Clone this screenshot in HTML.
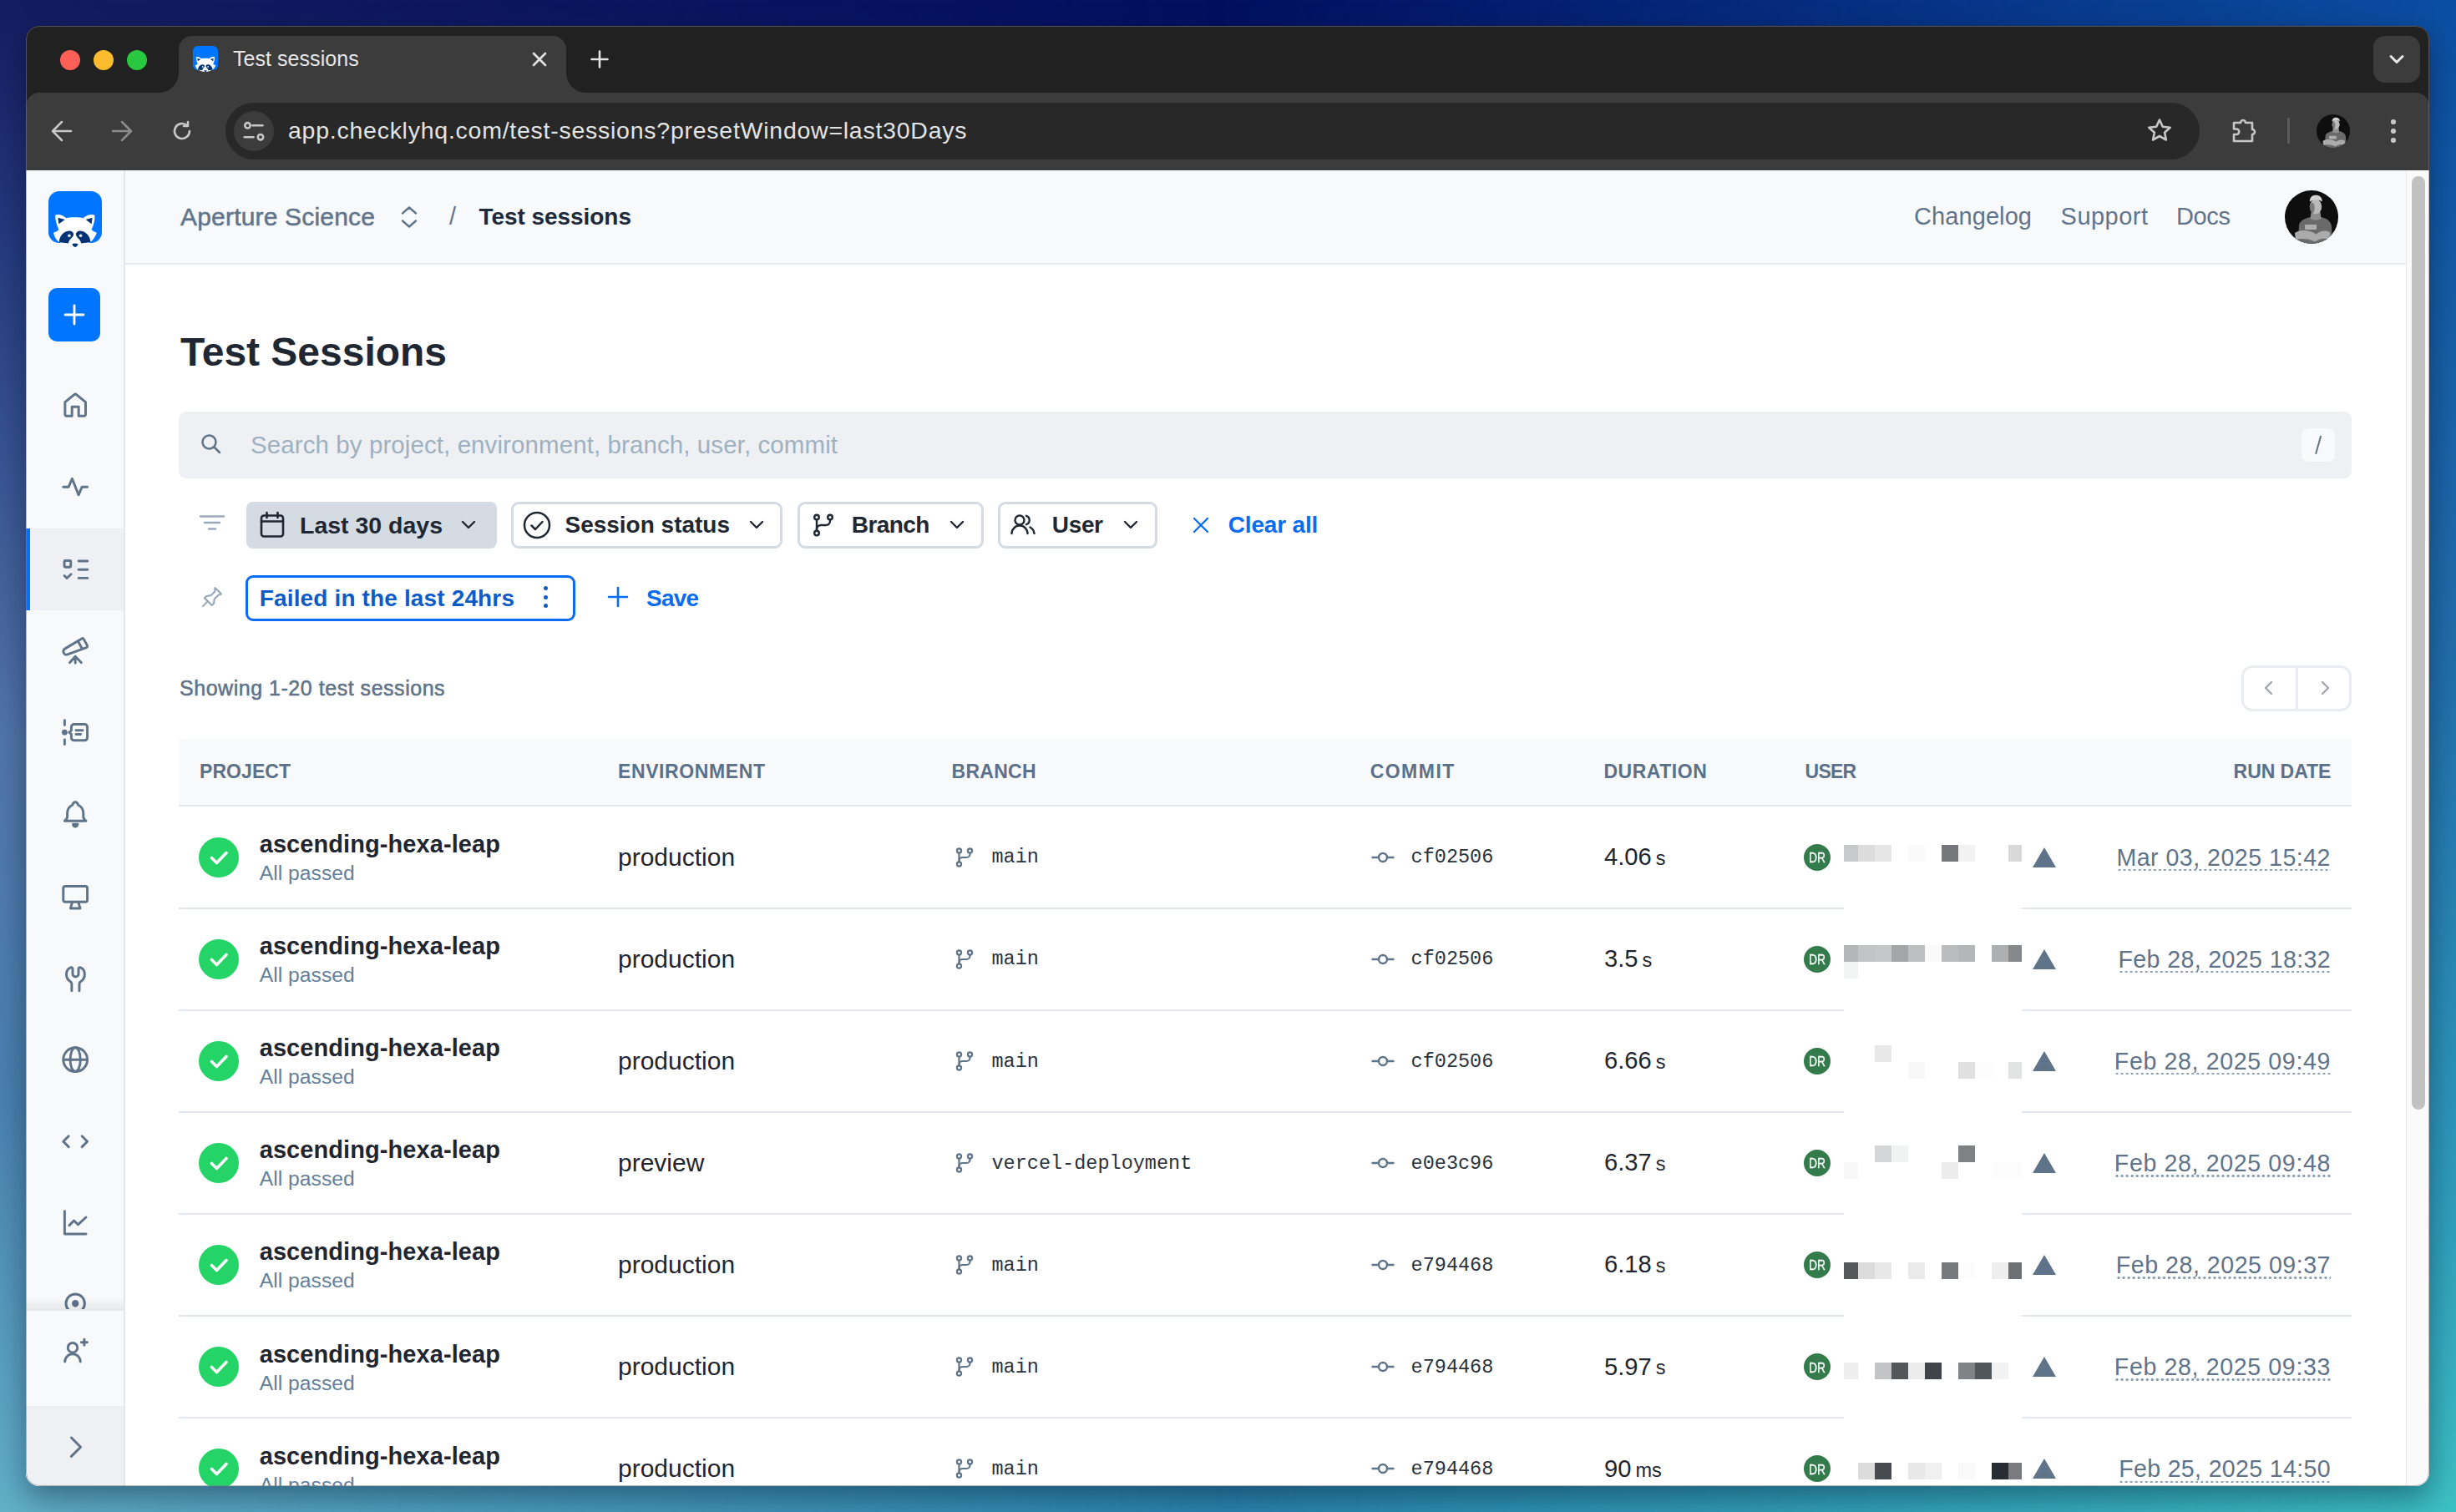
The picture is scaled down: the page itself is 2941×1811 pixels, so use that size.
<!DOCTYPE html><html><head><meta charset="utf-8"><style>
html,body{margin:0;padding:0;width:2941px;height:1811px;overflow:hidden;}
body{position:relative;font-family:"Liberation Sans",sans-serif;}
.t{position:absolute;white-space:nowrap;line-height:1;}
.r{position:absolute;box-sizing:border-box;}
#bg{position:absolute;left:0;top:0;width:2941px;height:1811px;background:linear-gradient(to bottom,#020f60 0%,#163780 40%,#2a86b0 100%);}
#bgl{position:absolute;left:0;top:0;width:2941px;height:1811px;background:linear-gradient(to bottom,#141b5e 0%,#263c80 17%,#5276aa 49%,#4a82b0 73%,#62b0c8 100%);-webkit-mask-image:linear-gradient(to right,#000 0%,transparent 50%);mask-image:linear-gradient(to right,#000 0%,transparent 50%);}
#bg2{position:absolute;left:0;top:0;width:2941px;height:1811px;background:linear-gradient(to bottom,#0b4ea2 0%,#2270ac 45%,#2f9cbb 78%,#3cc0c4 100%);-webkit-mask-image:linear-gradient(to right,transparent 50%,#000 100%);mask-image:linear-gradient(to right,transparent 50%,#000 100%);}
#win{position:absolute;left:0;top:0;width:2941px;height:1811px;clip-path:inset(31px 32px 31px 31px round 16px);}
</style></head><body>
<div id="bg"></div><div id="bgl"></div><div id="bg2"></div>
<div class="r" style="left:31.00px;top:31.00px;width:2878.00px;height:1749.00px;border-radius:16px;box-shadow:0 14px 36px rgba(0,10,30,0.40);"></div>
<div id="win">
<div class="r" style="left:31.00px;top:31.00px;width:2878.00px;height:96.00px;background:#202120;"></div>
<div class="r" style="left:72.00px;top:60.00px;width:24.00px;height:24.00px;border-radius:50%;background:#fe5f57;"></div>
<div class="r" style="left:112.00px;top:60.00px;width:24.00px;height:24.00px;border-radius:50%;background:#febc2e;"></div>
<div class="r" style="left:152.00px;top:60.00px;width:24.00px;height:24.00px;border-radius:50%;background:#28c840;"></div>
<div class="r" style="left:214.00px;top:43.00px;width:464.00px;height:68.00px;background:#3c3c3c;border-radius:16px 16px 0 0;"></div>
<div class="r" style="left:190.00px;top:87.00px;width:24.00px;height:24.00px;background:radial-gradient(circle at 0 0,transparent 23.5px,#3c3c3c 24.5px);"></div>
<div class="r" style="left:678.00px;top:87.00px;width:24.00px;height:24.00px;background:radial-gradient(circle at 100% 0,transparent 23.5px,#3c3c3c 24.5px);"></div>
<div class="r" style="left:2842.00px;top:43.00px;width:56.00px;height:56.00px;background:#3c3c3c;border-radius:14px;"></div>
<svg class="r" style="left:2856.00px;top:57.00px;" width="28.00" height="28.00" viewBox="0 0 24 24" fill="none" stroke="#e8e8e8" stroke-width="2.6" stroke-linecap="round" stroke-linejoin="round"><path d="M6 9l6 6l6 -6"/></svg>
<div class="r" style="left:31.00px;top:111.00px;width:2878.00px;height:93.00px;background:#3c3c3c;border-radius:16px 16px 0 0;"></div>
<div class="r" style="left:270.00px;top:123.00px;width:2364.00px;height:67.50px;background:#282828;border-radius:34px;"></div>
<div class="r" style="left:280.00px;top:132.50px;width:48.00px;height:48.00px;background:#3c3c3c;border-radius:50%;"></div>
<div class="t" style="left:279.00px;top:57.84px;font-size:25.00px;color:#e6e6e6;font-weight:400;font-family:'Liberation Sans',sans-serif;letter-spacing:0.053px;">Test sessions</div>
<div class="t" style="left:345.00px;top:142.28px;font-size:28.50px;color:#e3e3e3;font-weight:400;font-family:'Liberation Sans',sans-serif;letter-spacing:0.745px;">app.checklyhq.com/test-sessions?presetWindow=last30Days</div>
<svg class="r" style="left:61.00px;top:144.00px;" width="26.00" height="26.00" viewBox="0 0 26 26" fill="none" stroke="#c7c7c7" stroke-width="2.5" stroke-linecap="round" stroke-linejoin="round"><path d="M2 13H24 M13 2L2 13L13 24"/></svg>
<svg class="r" style="left:133.00px;top:144.00px;" width="26.00" height="26.00" viewBox="0 0 26 26" fill="none" stroke="#8c8c8c" stroke-width="2.5" stroke-linecap="round" stroke-linejoin="round"><path d="M24 13H2 M13 2L24 13L13 24"/></svg>
<svg class="r" style="left:204.00px;top:143.00px;" width="28.00" height="28.00" viewBox="0 0 28 28" fill="none" stroke="#c7c7c7" stroke-width="2.6" stroke-linecap="round" stroke-linejoin="round"><path d="M23 14a9 9 0 1 1 -3 -6.7"/><path d="M21 3v5h-5"/></svg>
<svg class="r" style="left:288.00px;top:140.50px;" width="32.00" height="32.00" viewBox="0 0 32 32" fill="none" stroke="#c7c7c7" stroke-width="2.6" stroke-linecap="round" stroke-linejoin="round"><circle cx="8.5" cy="9.3" r="3.2"/><path d="M14.5 9.3H26.5"/><path d="M4.8 23.2H15.5"/><circle cx="24" cy="23.2" r="3.2"/></svg>
<svg class="r" style="left:2570.00px;top:140.00px;" width="32.00" height="32.00" viewBox="0 0 32 32" fill="none" stroke="#c7c7c7" stroke-width="2.6" stroke-linecap="round" stroke-linejoin="round"><path d="M16 3.5l3.8 8.2l8.9 1l-6.6 6l1.8 8.8l-7.9 -4.5l-7.9 4.5l1.8 -8.8l-6.6 -6l8.9 -1z"/></svg>
<svg class="r" style="left:2669.00px;top:139.00px;" width="36.00" height="36.00" viewBox="0 0 36 36" fill="none" stroke="#c7c7c7" stroke-width="2.6" stroke-linecap="round" stroke-linejoin="round"><path d="M6 8H14A3 3 0 0 1 20 8H28V16A3 3 0 0 1 28 22V30H6V22H9A3.2 3.2 0 0 0 9 15.5H6Z"/></svg>
<div class="r" style="left:2739.00px;top:141.00px;width:2.50px;height:31.00px;background:#5c5c5c;border-radius:1px;"></div>
<svg class="r" style="left:2774.00px;top:137.00px" width="40.00" height="40.00" viewBox="0 0 64 64"><clipPath id="avc1"><circle cx="32" cy="32" r="32"/></clipPath><filter id="avf1"><feGaussianBlur stdDeviation="0.7"/></filter><g clip-path="url(#avc1)"><rect width="64" height="64" fill="#0e0e0e"/><g filter="url(#avf1)"><path d="M16 64L17 41C19 35 26 33 31 32L43 32C49 33 55 36 56 43L57 64Z" fill="#6a6a6a"/><path d="M31.5 26L42.5 26L43.5 34Q37 37.5 30.5 34Z" fill="#8f8f8f"/><ellipse cx="37" cy="19.5" rx="7.2" ry="9" fill="#b9b9b9"/><ellipse cx="32.8" cy="21" rx="3" ry="6.5" fill="#4a4a4a" opacity="0.55"/><path d="M29.8 13.5C29.8 7.5 33.5 5.8 37.5 5.8C41.5 5.8 44.8 8.3 44.8 13.5C41.8 10.8 33.8 10.8 29.8 13.5Z" fill="#d2d2d2"/><rect x="24" y="41" width="14" height="6" rx="1" fill="#c6c6c6" opacity="0.75"/><path d="M12 51C18 46.5 30 47 37.5 52.5C43 48 50 47.5 54 50.5L54.5 59C47 56.5 41 58 36 61.5C28 57.5 18 57 13 60Z" fill="#ababab"/></g></g></svg>
<div class="r" style="left:2863.30px;top:143.30px;width:5.40px;height:5.40px;border-radius:50%;background:#c7c7c7;"></div>
<div class="r" style="left:2863.30px;top:154.30px;width:5.40px;height:5.40px;border-radius:50%;background:#c7c7c7;"></div>
<div class="r" style="left:2863.30px;top:165.30px;width:5.40px;height:5.40px;border-radius:50%;background:#c7c7c7;"></div>
<svg class="r" style="left:636.00px;top:61.00px;" width="20.00" height="20.00" viewBox="0 0 20 20" fill="none" stroke="#e3e3e3" stroke-width="2.6" stroke-linecap="round" stroke-linejoin="round"><path d="M3 3L17 17M17 3L3 17"/></svg>
<svg class="r" style="left:707.00px;top:60.00px;" width="22.00" height="22.00" viewBox="0 0 22 22" fill="none" stroke="#e3e3e3" stroke-width="2.6" stroke-linecap="round" stroke-linejoin="round"><path d="M11 1.5V20.5M1.5 11H20.5"/></svg>
<div class="r" style="left:231.00px;top:55.00px;width:30.00px;height:29.06px;background:#0075ff;border-radius:6.00px;"></div>
<svg class="r" style="left:231.00px;top:55.00px;overflow:visible" width="30.00" height="31.40" viewBox="0 0 64 67"><path fill="#fff" d="M8.2 28.6C12 27 17 28.5 21.4 32.3C25 31 38 31 41.5 32.3C46 28.5 51 27 55.3 28.6C56 35 54 41 51.6 46C53 48 55.5 49 57.9 49.7C56 55 53 59 50.5 60.8C46 63 38 66 31.5 66.5C25 66 17 63 12.9 60.8C10 59 7 55 6.1 49.7C8.5 49 11 48 12.4 46C10 41 8 35 8.2 28.6Z"/><path fill="#003274" d="M11.4 31.7L19.8 33.9L12.4 39.2Z M52.6 31.7L44.7 33.9L51.6 39.2Z"/><path fill="#003274" d="M12.9 60.8C13 54 18 48 24.6 47.5C28 47.3 30.5 49.5 30 52.5C29 56 25 57 23.8 62.4C19 62 15 61.5 12.9 60.8Z M50.5 60.8C50 54 45 48 38.4 47.5C35 47.3 32.5 49.5 33 52.5C34 56 38 57 39.2 62.4C44 62 48 61.5 50.5 60.8Z"/><circle fill="#fff" cx="24.9" cy="53.2" r="1.8"/><circle fill="#fff" cx="38.6" cy="53.2" r="1.8"/><path fill="#003274" d="M28.3 63.2Q32 61.6 35.7 63.2Q34.5 66.6 32 67Q29.5 66.6 28.3 63.2Z"/></svg>
<div class="r" style="left:31.00px;top:204.00px;width:118.00px;height:1576.00px;background:#f8f9fb;"></div>
<div class="r" style="left:148.00px;top:204.00px;width:2.00px;height:1576.00px;background:#e3e7ec;"></div>
<div class="r" style="left:58.20px;top:228.50px;width:64.00px;height:62.00px;background:#0075ff;border-radius:13.00px;"></div>
<svg class="r" style="left:58.20px;top:228.50px;overflow:visible" width="64.00" height="67.00" viewBox="0 0 64 67"><path fill="#fff" d="M8.2 28.6C12 27 17 28.5 21.4 32.3C25 31 38 31 41.5 32.3C46 28.5 51 27 55.3 28.6C56 35 54 41 51.6 46C53 48 55.5 49 57.9 49.7C56 55 53 59 50.5 60.8C46 63 38 66 31.5 66.5C25 66 17 63 12.9 60.8C10 59 7 55 6.1 49.7C8.5 49 11 48 12.4 46C10 41 8 35 8.2 28.6Z"/><path fill="#003274" d="M11.4 31.7L19.8 33.9L12.4 39.2Z M52.6 31.7L44.7 33.9L51.6 39.2Z"/><path fill="#003274" d="M12.9 60.8C13 54 18 48 24.6 47.5C28 47.3 30.5 49.5 30 52.5C29 56 25 57 23.8 62.4C19 62 15 61.5 12.9 60.8Z M50.5 60.8C50 54 45 48 38.4 47.5C35 47.3 32.5 49.5 33 52.5C34 56 38 57 39.2 62.4C44 62 48 61.5 50.5 60.8Z"/><circle fill="#fff" cx="24.9" cy="53.2" r="1.8"/><circle fill="#fff" cx="38.6" cy="53.2" r="1.8"/><path fill="#003274" d="M28.3 63.2Q32 61.6 35.7 63.2Q34.5 66.6 32 67Q29.5 66.6 28.3 63.2Z"/></svg>
<div class="r" style="left:58.00px;top:345.00px;width:62.00px;height:63.50px;background:#0075ff;border-radius:10px;"></div>
<svg class="r" style="left:73.00px;top:360.70px;" width="32.00" height="32.00" viewBox="0 0 32 32" fill="none" stroke="#fff" stroke-width="2.8" stroke-linecap="round" stroke-linejoin="round"><path d="M16 5V27M5 16H27"/></svg>
<div class="r" style="left:31.00px;top:633.00px;width:117.00px;height:98.00px;background:#eef0f4;"></div>
<div class="r" style="left:31.00px;top:633.00px;width:5.00px;height:98.00px;background:#0a72f8;"></div>
<svg class="r" style="left:70.80px;top:465.80px;" width="38.40" height="38.40" viewBox="0 0 24 24" fill="none" stroke="#5f7389" stroke-width="1.85" stroke-linecap="round" stroke-linejoin="round"><path d="M4.3 9.8L11 4.3a1.5 1.5 0 0 1 2 0L19.7 9.8V19a1.2 1.2 0 0 1 -1.2 1.2H14.5V13.3H9.5V20.2H5.5a1.2 1.2 0 0 1 -1.2 -1.2Z"/></svg>
<svg class="r" style="left:70.80px;top:563.80px;" width="38.40" height="38.40" viewBox="0 0 24 24" fill="none" stroke="#5f7389" stroke-width="1.85" stroke-linecap="round" stroke-linejoin="round"><path d="M3 12h4l2.6 -6.2l4.8 12.2l2.6 -6h4"/></svg>
<svg class="r" style="left:70.80px;top:661.80px;" width="38.40" height="38.40" viewBox="0 0 24 24" fill="none" stroke="#5f7389" stroke-width="1.85" stroke-linecap="round" stroke-linejoin="round"><rect x="3.8" y="6" width="4.8" height="4.8" rx="0.6"/><path d="M3.8 17.2l1.9 1.9l3.1 -3"/><path d="M14.5 6.2h6.6"/><path d="M14.5 12.6h6.6"/><path d="M14.5 19h6.6"/></svg>
<svg class="r" style="left:70.80px;top:759.80px;" width="38.40" height="38.40" viewBox="0 0 24 24" fill="none" stroke="#5f7389" stroke-width="1.85" stroke-linecap="round" stroke-linejoin="round"><path d="M3.3 13.7l.2 .3c.5 .9 1.6 1.3 2.6 .9l14.2 -5.2a1 1 0 0 0 .6 -1.5l-2.6 -4.7a1.1 1.1 0 0 0 -1.5 -.4l-12.7 7.6c-1 .6 -1.4 1.9 -.8 2.9z"/><path d="M14 5l3 5.5"/><path d="M7.9 21l4.1 -4.6l4.4 4.6M12 16.4v5"/></svg>
<svg class="r" style="left:70.80px;top:857.80px;" width="38.40" height="38.40" viewBox="0 0 24 24" fill="none" stroke="#5f7389" stroke-width="1.85" stroke-linecap="round" stroke-linejoin="round"><path d="M4 3v3.5M4 17.5v3.5"/><circle cx="4" cy="12" r="1.2" fill="#5f7389"/><path d="M9 8a2 2 0 0 1 2 -2h8a2 2 0 0 1 2 2v8a2 2 0 0 1 -2 2h-8a2 2 0 0 1 -2 -2v-2.6l-1.6 -1.4l1.6 -1.4z"/><path d="M12.5 10.5h5M12.5 13.5h3.5"/></svg>
<svg class="r" style="left:70.80px;top:955.80px;" width="38.40" height="38.40" viewBox="0 0 24 24" fill="none" stroke="#5f7389" stroke-width="1.85" stroke-linecap="round" stroke-linejoin="round"><path d="M10 5a2 2 0 1 1 4 0a7 7 0 0 1 4 6v3a4 4 0 0 0 2 3h-16a4 4 0 0 0 2 -3v-3a7 7 0 0 1 4 -6"/><path d="M10.3 19.6h3.4a1.7 1.7 0 0 1 -3.4 0z" fill="#5f7389"/></svg>
<svg class="r" style="left:70.80px;top:1053.80px;" width="38.40" height="38.40" viewBox="0 0 24 24" fill="none" stroke="#5f7389" stroke-width="1.85" stroke-linecap="round" stroke-linejoin="round"><rect x="3" y="4.7" width="18" height="11.7" rx="1.5"/><path d="M9.8 16.4L8.4 21.2H15.6L14.2 16.4"/></svg>
<svg class="r" style="left:70.80px;top:1151.80px;" width="38.40" height="38.40" viewBox="0 0 24 24" fill="none" stroke="#5f7389" stroke-width="1.85" stroke-linecap="round" stroke-linejoin="round"><path d="M9.3 21.7V16.5C9.3 15.5 8.8 15 8 14.5C6.2 13.3 5.3 11.5 5.3 9.5C5.3 7 6.8 5 8.5 4.3C9.3 4 10 4.5 10 5.3V9A2.2 2.2 0 0 0 14.4 9V5.3C14.4 4.5 15.1 4 15.9 4.3C17.6 5 19 7 19 9.5C19 11.5 18.1 13.3 16.3 14.5C15.5 15 15 15.5 15 16.5V21.7"/></svg>
<svg class="r" style="left:70.80px;top:1249.80px;" width="38.40" height="38.40" viewBox="0 0 24 24" fill="none" stroke="#5f7389" stroke-width="1.85" stroke-linecap="round" stroke-linejoin="round"><circle cx="12" cy="12" r="9"/><path d="M3.5 12h17"/><ellipse cx="12" cy="12" rx="3.8" ry="9"/></svg>
<svg class="r" style="left:70.80px;top:1347.80px;" width="38.40" height="38.40" viewBox="0 0 24 24" fill="none" stroke="#5f7389" stroke-width="1.85" stroke-linecap="round" stroke-linejoin="round"><path d="M7 8l-4 4l4 4M17 8l4 4l-4 4"/></svg>
<svg class="r" style="left:70.80px;top:1445.80px;" width="38.40" height="38.40" viewBox="0 0 24 24" fill="none" stroke="#5f7389" stroke-width="1.85" stroke-linecap="round" stroke-linejoin="round"><path d="M4 3v17h16"/><path d="M7.5 13.5l3.5 -3.5l3 3l6 -5.5"/></svg>
<svg class="r" style="left:70.80px;top:1541.80px;" width="38.40" height="38.40" viewBox="0 0 24 24" fill="none" stroke="#5f7389" stroke-width="1.85" stroke-linecap="round" stroke-linejoin="round"><circle cx="12" cy="12" r="7"/><circle cx="12" cy="12" r="1.7" fill="#5f7389"/></svg>
<div class="r" style="left:31.00px;top:1554.00px;width:117.00px;height:15.00px;background:linear-gradient(to bottom,rgba(0,0,0,0),rgba(0,0,0,0.07));"></div>
<div class="r" style="left:31.00px;top:1569.00px;width:117.00px;height:115.00px;background:#f8f9fb;"></div>
<div class="r" style="left:31.00px;top:1568.00px;width:117.00px;height:1.50px;background:#e6e8ea;"></div>
<svg class="r" style="left:70.80px;top:1598.80px;" width="38.40" height="38.40" viewBox="0 0 24 24" fill="none" stroke="#5f7389" stroke-width="1.85" stroke-linecap="round" stroke-linejoin="round"><circle cx="10" cy="9.5" r="3.6"/><path d="M4.2 20a5.8 5.8 0 0 1 11.6 0"/><path d="M16.5 5.5h4.4M18.7 3.3v4.4"/></svg>
<div class="r" style="left:31.00px;top:1684.00px;width:117.00px;height:96.00px;background:#eef0f4;"></div>
<svg class="r" style="left:70.80px;top:1713.80px;" width="38.40" height="38.40" viewBox="0 0 24 24" fill="none" stroke="#5f7389" stroke-width="1.85" stroke-linecap="round" stroke-linejoin="round"><path d="M9 5l7 7l-7 7"/></svg>
<div class="r" style="left:150.00px;top:204.00px;width:2731.00px;height:113.00px;background:#f8f9fb;"></div>
<div class="r" style="left:150.00px;top:315.00px;width:2731.00px;height:2.00px;background:#e8ebef;"></div>
<div class="t" style="left:216.00px;top:244.61px;font-size:30.00px;color:#60758b;font-weight:400;font-family:'Liberation Sans',sans-serif;letter-spacing:0.191px;-webkit-text-stroke:0.5px #60758b;">Aperture Science</div>
<svg class="r" style="left:474.00px;top:244.00px;" width="32.00" height="32.00" viewBox="0 0 32 32" fill="none" stroke="#60758b" stroke-width="2.4" stroke-linecap="round" stroke-linejoin="round"><path d="M8 11.5L16 4.5L24 11.5M8 20.5L16 27.5L24 20.5"/></svg>
<div class="t" style="left:538.00px;top:245.45px;font-size:29.00px;color:#60758b;font-weight:400;font-family:'Liberation Sans',sans-serif;">/</div>
<div class="t" style="left:573.50px;top:246.30px;font-size:28.00px;color:#1e293b;font-weight:700;font-family:'Liberation Sans',sans-serif;letter-spacing:-0.052px;">Test sessions</div>
<div class="t" style="left:2292.00px;top:245.45px;font-size:29.00px;color:#60758b;font-weight:400;font-family:'Liberation Sans',sans-serif;letter-spacing:0.089px;">Changelog</div>
<div class="t" style="left:2467.60px;top:245.45px;font-size:29.00px;color:#60758b;font-weight:400;font-family:'Liberation Sans',sans-serif;letter-spacing:0.471px;">Support</div>
<div class="t" style="left:2606.00px;top:245.45px;font-size:29.00px;color:#60758b;font-weight:400;font-family:'Liberation Sans',sans-serif;letter-spacing:-0.357px;">Docs</div>
<svg class="r" style="left:2736.00px;top:228.00px" width="64.00" height="64.00" viewBox="0 0 64 64"><clipPath id="avc2"><circle cx="32" cy="32" r="32"/></clipPath><filter id="avf2"><feGaussianBlur stdDeviation="0.7"/></filter><g clip-path="url(#avc2)"><rect width="64" height="64" fill="#0e0e0e"/><g filter="url(#avf2)"><path d="M16 64L17 41C19 35 26 33 31 32L43 32C49 33 55 36 56 43L57 64Z" fill="#6a6a6a"/><path d="M31.5 26L42.5 26L43.5 34Q37 37.5 30.5 34Z" fill="#8f8f8f"/><ellipse cx="37" cy="19.5" rx="7.2" ry="9" fill="#b9b9b9"/><ellipse cx="32.8" cy="21" rx="3" ry="6.5" fill="#4a4a4a" opacity="0.55"/><path d="M29.8 13.5C29.8 7.5 33.5 5.8 37.5 5.8C41.5 5.8 44.8 8.3 44.8 13.5C41.8 10.8 33.8 10.8 29.8 13.5Z" fill="#d2d2d2"/><rect x="24" y="41" width="14" height="6" rx="1" fill="#c6c6c6" opacity="0.75"/><path d="M12 51C18 46.5 30 47 37.5 52.5C43 48 50 47.5 54 50.5L54.5 59C47 56.5 41 58 36 61.5C28 57.5 18 57 13 60Z" fill="#ababab"/></g></g></svg>
<div class="r" style="left:2881.00px;top:204.00px;width:28.00px;height:1576.00px;background:#fafafa;"></div>
<div class="r" style="left:2880.50px;top:204.00px;width:1.50px;height:1576.00px;background:#e8e8e8;"></div>
<div class="r" style="left:2888.00px;top:211.00px;width:16.00px;height:1118.00px;background:#c1c1c1;border-radius:8px;"></div>
<div class="r" style="left:150.00px;top:317.00px;width:2730.50px;height:1463.00px;background:#fff;"></div>
<div class="t" style="left:216.00px;top:397.97px;font-size:48.00px;color:#1f2733;font-weight:700;font-family:'Liberation Sans',sans-serif;letter-spacing:-0.021px;">Test Sessions</div>
<div class="r" style="left:214.00px;top:493.00px;width:2602.00px;height:79.50px;background:#eef0f4;border-radius:9px;"></div>
<svg class="r" style="left:238.00px;top:517.00px;" width="30.00" height="30.00" viewBox="0 0 30 30" fill="none" stroke="#5f7389" stroke-width="2.5" stroke-linecap="round" stroke-linejoin="round"><circle cx="12.5" cy="12.5" r="8"/><path d="M18.5 18.5L25 25"/></svg>
<div class="t" style="left:300.00px;top:517.83px;font-size:29.50px;color:#9fb0c0;font-weight:400;font-family:'Liberation Sans',sans-serif;letter-spacing:0.088px;">Search by project, environment, branch, user, commit</div>
<div class="r" style="left:2756.00px;top:513.00px;width:40.00px;height:40.00px;background:#f8f9fb;border-radius:8px;"></div>
<svg class="r" style="left:2762.00px;top:519.00px;" width="28.00" height="28.00" viewBox="0 0 28 28" fill="none" stroke="#5f7389" stroke-width="2" stroke-linecap="round" stroke-linejoin="round"><path d="M17 3.8L11.3 24"/></svg>
<svg class="r" style="left:237.00px;top:609.50px;" width="34.00" height="34.00" viewBox="0 0 34 34" fill="none" stroke="#9aa9b9" stroke-width="2.4" stroke-linecap="round" stroke-linejoin="round"><path d="M3 8.5H31M8 16H26M13 23.5H21"/></svg>
<div class="r" style="left:295.00px;top:601.00px;width:300.00px;height:55.50px;background:#d5dbe3;border-radius:8px;"></div>
<svg class="r" style="left:308.00px;top:610.70px;" width="36.00" height="36.00" viewBox="0 0 36 36" fill="none" stroke="#1f2733" stroke-width="2.6" stroke-linecap="round" stroke-linejoin="round"><rect x="5" y="6.5" width="26" height="25" rx="3"/><path d="M5 13.5H31M11.5 3V9M24.5 3V9"/></svg>
<div class="t" style="left:359.00px;top:614.88px;font-size:28.50px;color:#1f2733;font-weight:700;font-family:'Liberation Sans',sans-serif;letter-spacing:-0.009px;">Last 30 days</div>
<svg class="r" style="left:546.50px;top:613.50px;" width="28.00" height="28.00" viewBox="0 0 28 28" fill="none" stroke="#1f2733" stroke-width="2.4" stroke-linecap="round" stroke-linejoin="round"><path d="M7 11l7 7l7 -7"/></svg>
<div class="r" style="left:611.50px;top:601.00px;width:325.50px;height:55.50px;border:3px solid #d5dbe3;border-radius:9px;background:#fff;"></div>
<svg class="r" style="left:624.00px;top:609.50px;" width="38.00" height="38.00" viewBox="0 0 38 38" fill="none" stroke="#1f2733" stroke-width="2.5" stroke-linecap="round" stroke-linejoin="round"><circle cx="19" cy="19" r="15"/><path d="M12.5 19.5l4.5 4.5l8.5 -9"/></svg>
<div class="t" style="left:676.50px;top:615.30px;font-size:28.00px;color:#1f2733;font-weight:700;font-family:'Liberation Sans',sans-serif;letter-spacing:-0.010px;">Session status</div>
<svg class="r" style="left:891.50px;top:613.50px;" width="28.00" height="28.00" viewBox="0 0 28 28" fill="none" stroke="#1f2733" stroke-width="2.4" stroke-linecap="round" stroke-linejoin="round"><path d="M7 11l7 7l7 -7"/></svg>
<div class="r" style="left:955.00px;top:601.00px;width:222.50px;height:55.50px;border:3px solid #d5dbe3;border-radius:9px;background:#fff;"></div>
<svg class="r" style="left:969.70px;top:612.50px;" width="32.00" height="32.00" viewBox="0 0 32 32" fill="none" stroke="#1f2733" stroke-width="2.4" stroke-linecap="round" stroke-linejoin="round"><circle cx="8" cy="6.5" r="2.8"/><circle cx="8" cy="25.5" r="2.8"/><circle cx="24" cy="6.5" r="2.8"/><path d="M8 9.3V22.7"/><path d="M24 9.3V11a5 5 0 0 1 -5 5h-6a5 5 0 0 0 -5 5"/></svg>
<div class="t" style="left:1019.80px;top:615.30px;font-size:28.00px;color:#1f2733;font-weight:700;font-family:'Liberation Sans',sans-serif;letter-spacing:-0.594px;">Branch</div>
<svg class="r" style="left:1132.00px;top:613.50px;" width="28.00" height="28.00" viewBox="0 0 28 28" fill="none" stroke="#1f2733" stroke-width="2.4" stroke-linecap="round" stroke-linejoin="round"><path d="M7 11l7 7l7 -7"/></svg>
<div class="r" style="left:1195.00px;top:601.00px;width:191.00px;height:55.50px;border:3px solid #d5dbe3;border-radius:9px;background:#fff;"></div>
<svg class="r" style="left:1208.40px;top:611.50px;" width="34.00" height="34.00" viewBox="0 0 34 34" fill="none" stroke="#1f2733" stroke-width="2.4" stroke-linecap="round" stroke-linejoin="round"><circle cx="13" cy="11" r="5.5"/><path d="M3.5 27a9.5 9.5 0 0 1 19 0"/><path d="M21 5.8a5.5 5.5 0 0 1 0 10.4"/><path d="M25.5 19.5a9.5 9.5 0 0 1 5 7.5"/></svg>
<div class="t" style="left:1259.80px;top:615.30px;font-size:28.00px;color:#1f2733;font-weight:700;font-family:'Liberation Sans',sans-serif;letter-spacing:-0.354px;">User</div>
<svg class="r" style="left:1339.90px;top:613.50px;" width="28.00" height="28.00" viewBox="0 0 28 28" fill="none" stroke="#1f2733" stroke-width="2.4" stroke-linecap="round" stroke-linejoin="round"><path d="M7 11l7 7l7 -7"/></svg>
<svg class="r" style="left:1424.70px;top:615.50px;" width="26.00" height="26.00" viewBox="0 0 26 26" fill="none" stroke="#0a6cf0" stroke-width="2.3" stroke-linecap="round" stroke-linejoin="round"><path d="M5 5L21 21M21 5L5 21"/></svg>
<div class="t" style="left:1470.80px;top:615.30px;font-size:28.00px;color:#0a6cf0;font-weight:700;font-family:'Liberation Sans',sans-serif;letter-spacing:-0.181px;">Clear all</div>
<svg class="r" style="left:238.00px;top:699.00px;" width="32.00" height="32.00" viewBox="0 0 32 32" fill="none" stroke="#9aa9b9" stroke-width="2.2" stroke-linecap="round" stroke-linejoin="round"><path d="M19.5 5l7.5 7.5l-3.5 1.2l-4.7 4.7l-.8 5.2l-2.4 2.4l-8.6 -8.6l2.4 -2.4l5.2 -.8l4.7 -4.7z"/><path d="M11 21L5 27"/></svg>
<div class="r" style="left:294.40px;top:689.00px;width:394.60px;height:55.00px;border:3px solid #0a6cf0;border-radius:9px;"></div>
<div class="t" style="left:310.80px;top:703.10px;font-size:28.00px;color:#0c5cc8;font-weight:700;font-family:'Liberation Sans',sans-serif;letter-spacing:0.144px;">Failed in the last 24hrs</div>
<div class="r" style="left:650.50px;top:702.00px;width:5.00px;height:5.00px;border-radius:50%;background:#0c5cc8;"></div>
<div class="r" style="left:650.50px;top:712.50px;width:5.00px;height:5.00px;border-radius:50%;background:#0c5cc8;"></div>
<div class="r" style="left:650.50px;top:723.00px;width:5.00px;height:5.00px;border-radius:50%;background:#0c5cc8;"></div>
<svg class="r" style="left:726.00px;top:701.00px;" width="28.00" height="28.00" viewBox="0 0 28 28" fill="none" stroke="#0a6cf0" stroke-width="2.6" stroke-linecap="round" stroke-linejoin="round"><path d="M14 3V25M3 14H25"/></svg>
<div class="t" style="left:774.00px;top:703.10px;font-size:28.00px;color:#0a6cf0;font-weight:700;font-family:'Liberation Sans',sans-serif;letter-spacing:-0.798px;">Save</div>
<div class="t" style="left:215.00px;top:812.04px;font-size:25.00px;color:#5f7389;font-weight:400;font-family:'Liberation Sans',sans-serif;letter-spacing:0.530px;-webkit-text-stroke:0.55px #5f7389;">Showing 1-20 test sessions</div>
<div class="r" style="left:2684.40px;top:797.20px;width:131.20px;height:55.30px;border:3.5px solid #e9edf1;border-radius:13px;"></div>
<div class="r" style="left:2748.50px;top:797.20px;width:3.50px;height:55.30px;background:#e9edf1;"></div>
<svg class="r" style="left:2704.80px;top:812.30px;" width="24.00" height="24.00" viewBox="0 0 24 24" fill="none" stroke="#a2a5aa" stroke-width="2.4" stroke-linecap="round" stroke-linejoin="round"><path d="M15 5L8 12L15 19"/></svg>
<svg class="r" style="left:2771.60px;top:812.30px;" width="24.00" height="24.00" viewBox="0 0 24 24" fill="none" stroke="#a2a5aa" stroke-width="2.4" stroke-linecap="round" stroke-linejoin="round"><path d="M9 5L16 12L9 19"/></svg>
<div class="r" style="left:214.00px;top:885.00px;width:2602.00px;height:81.00px;background:#f8f9fb;"></div>
<div class="r" style="left:214.00px;top:964.00px;width:2602.00px;height:2.00px;background:#e2e8f0;"></div>
<div class="t" style="left:239.00px;top:913.43px;font-size:23.00px;color:#5b7189;font-weight:700;font-family:'Liberation Sans',sans-serif;letter-spacing:0.061px;">PROJECT</div>
<div class="t" style="left:740.00px;top:913.43px;font-size:23.00px;color:#5b7189;font-weight:700;font-family:'Liberation Sans',sans-serif;letter-spacing:0.604px;">ENVIRONMENT</div>
<div class="t" style="left:1139.50px;top:913.43px;font-size:23.00px;color:#5b7189;font-weight:700;font-family:'Liberation Sans',sans-serif;letter-spacing:0.268px;">BRANCH</div>
<div class="t" style="left:1640.70px;top:913.43px;font-size:23.00px;color:#5b7189;font-weight:700;font-family:'Liberation Sans',sans-serif;letter-spacing:1.468px;">COMMIT</div>
<div class="t" style="left:1920.40px;top:913.43px;font-size:23.00px;color:#5b7189;font-weight:700;font-family:'Liberation Sans',sans-serif;letter-spacing:0.532px;">DURATION</div>
<div class="t" style="left:2161.60px;top:913.43px;font-size:23.00px;color:#5b7189;font-weight:700;font-family:'Liberation Sans',sans-serif;letter-spacing:-0.801px;">USER</div>
<div class="t" style="right:149.70px;top:913.43px;font-size:23.00px;color:#5b7189;font-weight:700;font-family:'Liberation Sans',sans-serif;letter-spacing:-0.047px;">RUN DATE</div>
<div class="r" style="left:214.00px;top:1086.50px;width:2602.00px;height:2.00px;background:#e2e8f0;"></div>
<div class="r" style="left:238.00px;top:1002.50px;width:48.00px;height:48.00px;border-radius:50%;background:#24d466;"></div>
<svg class="r" style="left:238.00px;top:1002.50px;" width="48.00" height="48.00" viewBox="0 0 48 48" fill="none" stroke="#fff" stroke-width="3.6" stroke-linecap="round" stroke-linejoin="round"><path d="M15.5 24.5l6 6l11.5 -12"/></svg>
<div class="t" style="left:310.70px;top:996.75px;font-size:29.00px;color:#1f2630;font-weight:700;font-family:'Liberation Sans',sans-serif;letter-spacing:0.079px;">ascending-hexa-leap</div>
<div class="t" style="left:310.70px;top:1033.89px;font-size:24.70px;color:#64809a;font-weight:400;font-family:'Liberation Sans',sans-serif;letter-spacing:0.015px;">All passed</div>
<div class="t" style="left:740.00px;top:1011.51px;font-size:30.00px;color:#1f2630;font-weight:400;font-family:'Liberation Sans',sans-serif;">production</div>
<svg class="r" style="left:1141.00px;top:1012.50px;" width="28.00" height="28.00" viewBox="0 0 28 28" fill="none" stroke="#5f7389" stroke-width="2.2" stroke-linecap="round" stroke-linejoin="round"><circle cx="7.5" cy="6" r="2.6"/><circle cx="7.5" cy="22" r="2.6"/><circle cx="20.5" cy="6" r="2.6"/><path d="M7.5 8.6V19.4"/><path d="M20.5 8.6V10a4 4 0 0 1 -4 4h-5a4 4 0 0 0 -4 4"/></svg>
<div class="t" style="left:1187.50px;top:1015.21px;font-size:23.50px;color:#2a323c;font-weight:400;font-family:'Liberation Mono',monospace;">main</div>
<svg class="r" style="left:1640.80px;top:1011.50px;" width="30.00" height="30.00" viewBox="0 0 30 30" fill="none" stroke="#5f7389" stroke-width="2.4" stroke-linecap="round" stroke-linejoin="round"><circle cx="15" cy="15" r="5"/><path d="M2.5 15H10M20 15H27.5"/></svg>
<div class="t" style="left:1689.60px;top:1015.21px;font-size:23.50px;color:#2a323c;font-weight:400;font-family:'Liberation Mono',monospace;">cf02506</div>
<div class="t" style="left:1921.00px;top:1011.89px;font-size:29.20px;color:#1f2630;font-weight:400;font-family:'Liberation Sans',sans-serif;">4.06</div>
<div class="t" style="left:1982.83px;top:1016.71px;font-size:23.50px;color:#1f2630;font-weight:400;font-family:'Liberation Sans',sans-serif;">s</div>
<div class="r" style="left:2160.00px;top:1010.50px;width:32.00px;height:32.00px;border-radius:50%;background:#347b4c;"></div>
<div class="t" style="left:2165.50px;top:1018.83px;font-size:16.50px;color:#fff;font-weight:400;font-family:'Liberation Sans',sans-serif;transform:scaleX(0.84);transform-origin:0 0;-webkit-text-stroke:0.3px #fff;">DR</div>
<svg class="r" style="left:2433.30px;top:1011.50px;" width="30.00" height="30.00" viewBox="0 0 30 30" fill="#5f7389" stroke="none" stroke-width="0" stroke-linecap="round" stroke-linejoin="round"><path d="M15 3L29 27H1Z"/></svg>
<div class="t" style="right:150.00px;top:1012.59px;font-size:28.60px;color:#5f7389;font-weight:400;font-family:'Liberation Sans',sans-serif;letter-spacing:0.479px;">Mar 03, 2025 15:42</div>
<div class="r" style="left:2534.80px;top:1040.60px;width:256.20px;height:2.50px;background:radial-gradient(circle,#8ba0b3 48%,transparent 58%) 0 0/6.05px 2.5px repeat-x;"></div>
<div class="r" style="left:214.00px;top:1208.65px;width:2602.00px;height:2.00px;background:#e2e8f0;"></div>
<div class="r" style="left:238.00px;top:1124.65px;width:48.00px;height:48.00px;border-radius:50%;background:#24d466;"></div>
<svg class="r" style="left:238.00px;top:1124.65px;" width="48.00" height="48.00" viewBox="0 0 48 48" fill="none" stroke="#fff" stroke-width="3.6" stroke-linecap="round" stroke-linejoin="round"><path d="M15.5 24.5l6 6l11.5 -12"/></svg>
<div class="t" style="left:310.70px;top:1118.90px;font-size:29.00px;color:#1f2630;font-weight:700;font-family:'Liberation Sans',sans-serif;letter-spacing:0.079px;">ascending-hexa-leap</div>
<div class="t" style="left:310.70px;top:1156.04px;font-size:24.70px;color:#64809a;font-weight:400;font-family:'Liberation Sans',sans-serif;letter-spacing:0.015px;">All passed</div>
<div class="t" style="left:740.00px;top:1133.66px;font-size:30.00px;color:#1f2630;font-weight:400;font-family:'Liberation Sans',sans-serif;">production</div>
<svg class="r" style="left:1141.00px;top:1134.65px;" width="28.00" height="28.00" viewBox="0 0 28 28" fill="none" stroke="#5f7389" stroke-width="2.2" stroke-linecap="round" stroke-linejoin="round"><circle cx="7.5" cy="6" r="2.6"/><circle cx="7.5" cy="22" r="2.6"/><circle cx="20.5" cy="6" r="2.6"/><path d="M7.5 8.6V19.4"/><path d="M20.5 8.6V10a4 4 0 0 1 -4 4h-5a4 4 0 0 0 -4 4"/></svg>
<div class="t" style="left:1187.50px;top:1137.36px;font-size:23.50px;color:#2a323c;font-weight:400;font-family:'Liberation Mono',monospace;">main</div>
<svg class="r" style="left:1640.80px;top:1133.65px;" width="30.00" height="30.00" viewBox="0 0 30 30" fill="none" stroke="#5f7389" stroke-width="2.4" stroke-linecap="round" stroke-linejoin="round"><circle cx="15" cy="15" r="5"/><path d="M2.5 15H10M20 15H27.5"/></svg>
<div class="t" style="left:1689.60px;top:1137.36px;font-size:23.50px;color:#2a323c;font-weight:400;font-family:'Liberation Mono',monospace;">cf02506</div>
<div class="t" style="left:1921.00px;top:1134.04px;font-size:29.20px;color:#1f2630;font-weight:400;font-family:'Liberation Sans',sans-serif;">3.5</div>
<div class="t" style="left:1966.59px;top:1138.86px;font-size:23.50px;color:#1f2630;font-weight:400;font-family:'Liberation Sans',sans-serif;">s</div>
<div class="r" style="left:2160.00px;top:1132.65px;width:32.00px;height:32.00px;border-radius:50%;background:#347b4c;"></div>
<div class="t" style="left:2165.50px;top:1140.98px;font-size:16.50px;color:#fff;font-weight:400;font-family:'Liberation Sans',sans-serif;transform:scaleX(0.84);transform-origin:0 0;-webkit-text-stroke:0.3px #fff;">DR</div>
<svg class="r" style="left:2433.30px;top:1133.65px;" width="30.00" height="30.00" viewBox="0 0 30 30" fill="#5f7389" stroke="none" stroke-width="0" stroke-linecap="round" stroke-linejoin="round"><path d="M15 3L29 27H1Z"/></svg>
<div class="t" style="right:150.00px;top:1134.74px;font-size:28.60px;color:#5f7389;font-weight:400;font-family:'Liberation Sans',sans-serif;letter-spacing:0.360px;">Feb 28, 2025 18:32</div>
<div class="r" style="left:2536.80px;top:1162.75px;width:254.20px;height:2.50px;background:radial-gradient(circle,#8ba0b3 48%,transparent 58%) 0 0/6.05px 2.5px repeat-x;"></div>
<div class="r" style="left:214.00px;top:1330.80px;width:2602.00px;height:2.00px;background:#e2e8f0;"></div>
<div class="r" style="left:238.00px;top:1246.80px;width:48.00px;height:48.00px;border-radius:50%;background:#24d466;"></div>
<svg class="r" style="left:238.00px;top:1246.80px;" width="48.00" height="48.00" viewBox="0 0 48 48" fill="none" stroke="#fff" stroke-width="3.6" stroke-linecap="round" stroke-linejoin="round"><path d="M15.5 24.5l6 6l11.5 -12"/></svg>
<div class="t" style="left:310.70px;top:1241.05px;font-size:29.00px;color:#1f2630;font-weight:700;font-family:'Liberation Sans',sans-serif;letter-spacing:0.079px;">ascending-hexa-leap</div>
<div class="t" style="left:310.70px;top:1278.19px;font-size:24.70px;color:#64809a;font-weight:400;font-family:'Liberation Sans',sans-serif;letter-spacing:0.015px;">All passed</div>
<div class="t" style="left:740.00px;top:1255.81px;font-size:30.00px;color:#1f2630;font-weight:400;font-family:'Liberation Sans',sans-serif;">production</div>
<svg class="r" style="left:1141.00px;top:1256.80px;" width="28.00" height="28.00" viewBox="0 0 28 28" fill="none" stroke="#5f7389" stroke-width="2.2" stroke-linecap="round" stroke-linejoin="round"><circle cx="7.5" cy="6" r="2.6"/><circle cx="7.5" cy="22" r="2.6"/><circle cx="20.5" cy="6" r="2.6"/><path d="M7.5 8.6V19.4"/><path d="M20.5 8.6V10a4 4 0 0 1 -4 4h-5a4 4 0 0 0 -4 4"/></svg>
<div class="t" style="left:1187.50px;top:1259.51px;font-size:23.50px;color:#2a323c;font-weight:400;font-family:'Liberation Mono',monospace;">main</div>
<svg class="r" style="left:1640.80px;top:1255.80px;" width="30.00" height="30.00" viewBox="0 0 30 30" fill="none" stroke="#5f7389" stroke-width="2.4" stroke-linecap="round" stroke-linejoin="round"><circle cx="15" cy="15" r="5"/><path d="M2.5 15H10M20 15H27.5"/></svg>
<div class="t" style="left:1689.60px;top:1259.51px;font-size:23.50px;color:#2a323c;font-weight:400;font-family:'Liberation Mono',monospace;">cf02506</div>
<div class="t" style="left:1921.00px;top:1256.19px;font-size:29.20px;color:#1f2630;font-weight:400;font-family:'Liberation Sans',sans-serif;">6.66</div>
<div class="t" style="left:1982.83px;top:1261.01px;font-size:23.50px;color:#1f2630;font-weight:400;font-family:'Liberation Sans',sans-serif;">s</div>
<div class="r" style="left:2160.00px;top:1254.80px;width:32.00px;height:32.00px;border-radius:50%;background:#347b4c;"></div>
<div class="t" style="left:2165.50px;top:1263.13px;font-size:16.50px;color:#fff;font-weight:400;font-family:'Liberation Sans',sans-serif;transform:scaleX(0.84);transform-origin:0 0;-webkit-text-stroke:0.3px #fff;">DR</div>
<svg class="r" style="left:2433.30px;top:1255.80px;" width="30.00" height="30.00" viewBox="0 0 30 30" fill="#5f7389" stroke="none" stroke-width="0" stroke-linecap="round" stroke-linejoin="round"><path d="M15 3L29 27H1Z"/></svg>
<div class="t" style="right:150.00px;top:1256.89px;font-size:28.60px;color:#5f7389;font-weight:400;font-family:'Liberation Sans',sans-serif;letter-spacing:0.619px;">Feb 28, 2025 09:49</div>
<div class="r" style="left:2532.40px;top:1284.90px;width:258.60px;height:2.50px;background:radial-gradient(circle,#8ba0b3 48%,transparent 58%) 0 0/6.05px 2.5px repeat-x;"></div>
<div class="r" style="left:214.00px;top:1452.95px;width:2602.00px;height:2.00px;background:#e2e8f0;"></div>
<div class="r" style="left:238.00px;top:1368.95px;width:48.00px;height:48.00px;border-radius:50%;background:#24d466;"></div>
<svg class="r" style="left:238.00px;top:1368.95px;" width="48.00" height="48.00" viewBox="0 0 48 48" fill="none" stroke="#fff" stroke-width="3.6" stroke-linecap="round" stroke-linejoin="round"><path d="M15.5 24.5l6 6l11.5 -12"/></svg>
<div class="t" style="left:310.70px;top:1363.20px;font-size:29.00px;color:#1f2630;font-weight:700;font-family:'Liberation Sans',sans-serif;letter-spacing:0.079px;">ascending-hexa-leap</div>
<div class="t" style="left:310.70px;top:1400.34px;font-size:24.70px;color:#64809a;font-weight:400;font-family:'Liberation Sans',sans-serif;letter-spacing:0.015px;">All passed</div>
<div class="t" style="left:740.00px;top:1377.96px;font-size:30.00px;color:#1f2630;font-weight:400;font-family:'Liberation Sans',sans-serif;">preview</div>
<svg class="r" style="left:1141.00px;top:1378.95px;" width="28.00" height="28.00" viewBox="0 0 28 28" fill="none" stroke="#5f7389" stroke-width="2.2" stroke-linecap="round" stroke-linejoin="round"><circle cx="7.5" cy="6" r="2.6"/><circle cx="7.5" cy="22" r="2.6"/><circle cx="20.5" cy="6" r="2.6"/><path d="M7.5 8.6V19.4"/><path d="M20.5 8.6V10a4 4 0 0 1 -4 4h-5a4 4 0 0 0 -4 4"/></svg>
<div class="t" style="left:1187.50px;top:1381.66px;font-size:23.50px;color:#2a323c;font-weight:400;font-family:'Liberation Mono',monospace;">vercel-deployment</div>
<svg class="r" style="left:1640.80px;top:1377.95px;" width="30.00" height="30.00" viewBox="0 0 30 30" fill="none" stroke="#5f7389" stroke-width="2.4" stroke-linecap="round" stroke-linejoin="round"><circle cx="15" cy="15" r="5"/><path d="M2.5 15H10M20 15H27.5"/></svg>
<div class="t" style="left:1689.60px;top:1381.66px;font-size:23.50px;color:#2a323c;font-weight:400;font-family:'Liberation Mono',monospace;">e0e3c96</div>
<div class="t" style="left:1921.00px;top:1378.34px;font-size:29.20px;color:#1f2630;font-weight:400;font-family:'Liberation Sans',sans-serif;">6.37</div>
<div class="t" style="left:1982.83px;top:1383.16px;font-size:23.50px;color:#1f2630;font-weight:400;font-family:'Liberation Sans',sans-serif;">s</div>
<div class="r" style="left:2160.00px;top:1376.95px;width:32.00px;height:32.00px;border-radius:50%;background:#347b4c;"></div>
<div class="t" style="left:2165.50px;top:1385.28px;font-size:16.50px;color:#fff;font-weight:400;font-family:'Liberation Sans',sans-serif;transform:scaleX(0.84);transform-origin:0 0;-webkit-text-stroke:0.3px #fff;">DR</div>
<svg class="r" style="left:2433.30px;top:1377.95px;" width="30.00" height="30.00" viewBox="0 0 30 30" fill="#5f7389" stroke="none" stroke-width="0" stroke-linecap="round" stroke-linejoin="round"><path d="M15 3L29 27H1Z"/></svg>
<div class="t" style="right:150.00px;top:1379.04px;font-size:28.60px;color:#5f7389;font-weight:400;font-family:'Liberation Sans',sans-serif;letter-spacing:0.619px;">Feb 28, 2025 09:48</div>
<div class="r" style="left:2532.40px;top:1407.05px;width:258.60px;height:2.50px;background:radial-gradient(circle,#8ba0b3 48%,transparent 58%) 0 0/6.05px 2.5px repeat-x;"></div>
<div class="r" style="left:214.00px;top:1575.10px;width:2602.00px;height:2.00px;background:#e2e8f0;"></div>
<div class="r" style="left:238.00px;top:1491.10px;width:48.00px;height:48.00px;border-radius:50%;background:#24d466;"></div>
<svg class="r" style="left:238.00px;top:1491.10px;" width="48.00" height="48.00" viewBox="0 0 48 48" fill="none" stroke="#fff" stroke-width="3.6" stroke-linecap="round" stroke-linejoin="round"><path d="M15.5 24.5l6 6l11.5 -12"/></svg>
<div class="t" style="left:310.70px;top:1485.35px;font-size:29.00px;color:#1f2630;font-weight:700;font-family:'Liberation Sans',sans-serif;letter-spacing:0.079px;">ascending-hexa-leap</div>
<div class="t" style="left:310.70px;top:1522.49px;font-size:24.70px;color:#64809a;font-weight:400;font-family:'Liberation Sans',sans-serif;letter-spacing:0.015px;">All passed</div>
<div class="t" style="left:740.00px;top:1500.11px;font-size:30.00px;color:#1f2630;font-weight:400;font-family:'Liberation Sans',sans-serif;">production</div>
<svg class="r" style="left:1141.00px;top:1501.10px;" width="28.00" height="28.00" viewBox="0 0 28 28" fill="none" stroke="#5f7389" stroke-width="2.2" stroke-linecap="round" stroke-linejoin="round"><circle cx="7.5" cy="6" r="2.6"/><circle cx="7.5" cy="22" r="2.6"/><circle cx="20.5" cy="6" r="2.6"/><path d="M7.5 8.6V19.4"/><path d="M20.5 8.6V10a4 4 0 0 1 -4 4h-5a4 4 0 0 0 -4 4"/></svg>
<div class="t" style="left:1187.50px;top:1503.81px;font-size:23.50px;color:#2a323c;font-weight:400;font-family:'Liberation Mono',monospace;">main</div>
<svg class="r" style="left:1640.80px;top:1500.10px;" width="30.00" height="30.00" viewBox="0 0 30 30" fill="none" stroke="#5f7389" stroke-width="2.4" stroke-linecap="round" stroke-linejoin="round"><circle cx="15" cy="15" r="5"/><path d="M2.5 15H10M20 15H27.5"/></svg>
<div class="t" style="left:1689.60px;top:1503.81px;font-size:23.50px;color:#2a323c;font-weight:400;font-family:'Liberation Mono',monospace;">e794468</div>
<div class="t" style="left:1921.00px;top:1500.49px;font-size:29.20px;color:#1f2630;font-weight:400;font-family:'Liberation Sans',sans-serif;">6.18</div>
<div class="t" style="left:1982.83px;top:1505.31px;font-size:23.50px;color:#1f2630;font-weight:400;font-family:'Liberation Sans',sans-serif;">s</div>
<div class="r" style="left:2160.00px;top:1499.10px;width:32.00px;height:32.00px;border-radius:50%;background:#347b4c;"></div>
<div class="t" style="left:2165.50px;top:1507.43px;font-size:16.50px;color:#fff;font-weight:400;font-family:'Liberation Sans',sans-serif;transform:scaleX(0.84);transform-origin:0 0;-webkit-text-stroke:0.3px #fff;">DR</div>
<svg class="r" style="left:2433.30px;top:1500.10px;" width="30.00" height="30.00" viewBox="0 0 30 30" fill="#5f7389" stroke="none" stroke-width="0" stroke-linecap="round" stroke-linejoin="round"><path d="M15 3L29 27H1Z"/></svg>
<div class="t" style="right:150.00px;top:1501.19px;font-size:28.60px;color:#5f7389;font-weight:400;font-family:'Liberation Sans',sans-serif;letter-spacing:0.507px;">Feb 28, 2025 09:37</div>
<div class="r" style="left:2534.30px;top:1529.20px;width:256.70px;height:2.50px;background:radial-gradient(circle,#8ba0b3 48%,transparent 58%) 0 0/6.05px 2.5px repeat-x;"></div>
<div class="r" style="left:214.00px;top:1697.25px;width:2602.00px;height:2.00px;background:#e2e8f0;"></div>
<div class="r" style="left:238.00px;top:1613.25px;width:48.00px;height:48.00px;border-radius:50%;background:#24d466;"></div>
<svg class="r" style="left:238.00px;top:1613.25px;" width="48.00" height="48.00" viewBox="0 0 48 48" fill="none" stroke="#fff" stroke-width="3.6" stroke-linecap="round" stroke-linejoin="round"><path d="M15.5 24.5l6 6l11.5 -12"/></svg>
<div class="t" style="left:310.70px;top:1607.50px;font-size:29.00px;color:#1f2630;font-weight:700;font-family:'Liberation Sans',sans-serif;letter-spacing:0.079px;">ascending-hexa-leap</div>
<div class="t" style="left:310.70px;top:1644.64px;font-size:24.70px;color:#64809a;font-weight:400;font-family:'Liberation Sans',sans-serif;letter-spacing:0.015px;">All passed</div>
<div class="t" style="left:740.00px;top:1622.26px;font-size:30.00px;color:#1f2630;font-weight:400;font-family:'Liberation Sans',sans-serif;">production</div>
<svg class="r" style="left:1141.00px;top:1623.25px;" width="28.00" height="28.00" viewBox="0 0 28 28" fill="none" stroke="#5f7389" stroke-width="2.2" stroke-linecap="round" stroke-linejoin="round"><circle cx="7.5" cy="6" r="2.6"/><circle cx="7.5" cy="22" r="2.6"/><circle cx="20.5" cy="6" r="2.6"/><path d="M7.5 8.6V19.4"/><path d="M20.5 8.6V10a4 4 0 0 1 -4 4h-5a4 4 0 0 0 -4 4"/></svg>
<div class="t" style="left:1187.50px;top:1625.96px;font-size:23.50px;color:#2a323c;font-weight:400;font-family:'Liberation Mono',monospace;">main</div>
<svg class="r" style="left:1640.80px;top:1622.25px;" width="30.00" height="30.00" viewBox="0 0 30 30" fill="none" stroke="#5f7389" stroke-width="2.4" stroke-linecap="round" stroke-linejoin="round"><circle cx="15" cy="15" r="5"/><path d="M2.5 15H10M20 15H27.5"/></svg>
<div class="t" style="left:1689.60px;top:1625.96px;font-size:23.50px;color:#2a323c;font-weight:400;font-family:'Liberation Mono',monospace;">e794468</div>
<div class="t" style="left:1921.00px;top:1622.64px;font-size:29.20px;color:#1f2630;font-weight:400;font-family:'Liberation Sans',sans-serif;">5.97</div>
<div class="t" style="left:1982.83px;top:1627.46px;font-size:23.50px;color:#1f2630;font-weight:400;font-family:'Liberation Sans',sans-serif;">s</div>
<div class="r" style="left:2160.00px;top:1621.25px;width:32.00px;height:32.00px;border-radius:50%;background:#347b4c;"></div>
<div class="t" style="left:2165.50px;top:1629.58px;font-size:16.50px;color:#fff;font-weight:400;font-family:'Liberation Sans',sans-serif;transform:scaleX(0.84);transform-origin:0 0;-webkit-text-stroke:0.3px #fff;">DR</div>
<svg class="r" style="left:2433.30px;top:1622.25px;" width="30.00" height="30.00" viewBox="0 0 30 30" fill="#5f7389" stroke="none" stroke-width="0" stroke-linecap="round" stroke-linejoin="round"><path d="M15 3L29 27H1Z"/></svg>
<div class="t" style="right:150.00px;top:1623.34px;font-size:28.60px;color:#5f7389;font-weight:400;font-family:'Liberation Sans',sans-serif;letter-spacing:0.619px;">Feb 28, 2025 09:33</div>
<div class="r" style="left:2532.40px;top:1651.35px;width:258.60px;height:2.50px;background:radial-gradient(circle,#8ba0b3 48%,transparent 58%) 0 0/6.05px 2.5px repeat-x;"></div>
<div class="r" style="left:214.00px;top:1819.40px;width:2602.00px;height:2.00px;background:#e2e8f0;"></div>
<div class="r" style="left:238.00px;top:1735.40px;width:48.00px;height:48.00px;border-radius:50%;background:#24d466;"></div>
<svg class="r" style="left:238.00px;top:1735.40px;" width="48.00" height="48.00" viewBox="0 0 48 48" fill="none" stroke="#fff" stroke-width="3.6" stroke-linecap="round" stroke-linejoin="round"><path d="M15.5 24.5l6 6l11.5 -12"/></svg>
<div class="t" style="left:310.70px;top:1729.65px;font-size:29.00px;color:#1f2630;font-weight:700;font-family:'Liberation Sans',sans-serif;letter-spacing:0.079px;">ascending-hexa-leap</div>
<div class="t" style="left:310.70px;top:1766.79px;font-size:24.70px;color:#64809a;font-weight:400;font-family:'Liberation Sans',sans-serif;letter-spacing:0.015px;">All passed</div>
<div class="t" style="left:740.00px;top:1744.41px;font-size:30.00px;color:#1f2630;font-weight:400;font-family:'Liberation Sans',sans-serif;">production</div>
<svg class="r" style="left:1141.00px;top:1745.40px;" width="28.00" height="28.00" viewBox="0 0 28 28" fill="none" stroke="#5f7389" stroke-width="2.2" stroke-linecap="round" stroke-linejoin="round"><circle cx="7.5" cy="6" r="2.6"/><circle cx="7.5" cy="22" r="2.6"/><circle cx="20.5" cy="6" r="2.6"/><path d="M7.5 8.6V19.4"/><path d="M20.5 8.6V10a4 4 0 0 1 -4 4h-5a4 4 0 0 0 -4 4"/></svg>
<div class="t" style="left:1187.50px;top:1748.11px;font-size:23.50px;color:#2a323c;font-weight:400;font-family:'Liberation Mono',monospace;">main</div>
<svg class="r" style="left:1640.80px;top:1744.40px;" width="30.00" height="30.00" viewBox="0 0 30 30" fill="none" stroke="#5f7389" stroke-width="2.4" stroke-linecap="round" stroke-linejoin="round"><circle cx="15" cy="15" r="5"/><path d="M2.5 15H10M20 15H27.5"/></svg>
<div class="t" style="left:1689.60px;top:1748.11px;font-size:23.50px;color:#2a323c;font-weight:400;font-family:'Liberation Mono',monospace;">e794468</div>
<div class="t" style="left:1921.00px;top:1744.79px;font-size:29.20px;color:#1f2630;font-weight:400;font-family:'Liberation Sans',sans-serif;">90</div>
<div class="t" style="left:1958.48px;top:1749.61px;font-size:23.50px;color:#1f2630;font-weight:400;font-family:'Liberation Sans',sans-serif;">ms</div>
<div class="r" style="left:2160.00px;top:1743.40px;width:32.00px;height:32.00px;border-radius:50%;background:#347b4c;"></div>
<div class="t" style="left:2165.50px;top:1751.73px;font-size:16.50px;color:#fff;font-weight:400;font-family:'Liberation Sans',sans-serif;transform:scaleX(0.84);transform-origin:0 0;-webkit-text-stroke:0.3px #fff;">DR</div>
<svg class="r" style="left:2433.30px;top:1744.40px;" width="30.00" height="30.00" viewBox="0 0 30 30" fill="#5f7389" stroke="none" stroke-width="0" stroke-linecap="round" stroke-linejoin="round"><path d="M15 3L29 27H1Z"/></svg>
<div class="t" style="right:150.00px;top:1745.49px;font-size:28.60px;color:#5f7389;font-weight:400;font-family:'Liberation Sans',sans-serif;letter-spacing:0.325px;">Feb 25, 2025 14:50</div>
<div class="r" style="left:2537.40px;top:1773.50px;width:253.60px;height:2.50px;background:radial-gradient(circle,#8ba0b3 48%,transparent 58%) 0 0/6.05px 2.5px repeat-x;"></div>
<div class="r" style="left:2208.00px;top:966.00px;width:213.00px;height:814.00px;background:#fff;"></div>
<div class="r" style="left:2208.00px;top:1012.00px;width:17.00px;height:20.00px;background:#c8c9cb;"></div>
<div class="r" style="left:2225.00px;top:1012.00px;width:20.00px;height:20.00px;background:#dcdcdc;"></div>
<div class="r" style="left:2245.00px;top:1012.00px;width:20.00px;height:20.00px;background:#e6e6e6;"></div>
<div class="r" style="left:2285.00px;top:1012.00px;width:20.00px;height:20.00px;background:#f9f9f9;"></div>
<div class="r" style="left:2325.00px;top:1012.00px;width:20.00px;height:20.00px;background:#76777b;"></div>
<div class="r" style="left:2345.00px;top:1012.00px;width:20.00px;height:20.00px;background:#f2f2f2;"></div>
<div class="r" style="left:2405.00px;top:1012.00px;width:16.00px;height:20.00px;background:#d8d8d8;"></div>
<div class="r" style="left:2208.00px;top:1132.00px;width:17.00px;height:20.00px;background:#b5b6b8;"></div>
<div class="r" style="left:2225.00px;top:1132.00px;width:20.00px;height:20.00px;background:#c3c4c6;"></div>
<div class="r" style="left:2245.00px;top:1132.00px;width:20.00px;height:20.00px;background:#c6c7c9;"></div>
<div class="r" style="left:2265.00px;top:1132.00px;width:20.00px;height:20.00px;background:#a4a5a7;"></div>
<div class="r" style="left:2285.00px;top:1132.00px;width:20.00px;height:20.00px;background:#bebfc1;"></div>
<div class="r" style="left:2305.00px;top:1132.00px;width:20.00px;height:20.00px;background:#fafafa;"></div>
<div class="r" style="left:2325.00px;top:1132.00px;width:20.00px;height:20.00px;background:#bbbcbe;"></div>
<div class="r" style="left:2345.00px;top:1132.00px;width:20.00px;height:20.00px;background:#b5b6b8;"></div>
<div class="r" style="left:2385.00px;top:1132.00px;width:20.00px;height:20.00px;background:#aeafb1;"></div>
<div class="r" style="left:2405.00px;top:1132.00px;width:16.00px;height:20.00px;background:#86898c;"></div>
<div class="r" style="left:2208.00px;top:1152.00px;width:17.00px;height:20.00px;background:#f2f4f3;"></div>
<div class="r" style="left:2245.00px;top:1252.00px;width:20.00px;height:20.00px;background:#e8e8e8;"></div>
<div class="r" style="left:2285.00px;top:1272.00px;width:20.00px;height:20.00px;background:#f8f8f8;"></div>
<div class="r" style="left:2345.00px;top:1272.00px;width:20.00px;height:20.00px;background:#e0e0e0;"></div>
<div class="r" style="left:2365.00px;top:1272.00px;width:20.00px;height:20.00px;background:#fcfcfc;"></div>
<div class="r" style="left:2405.00px;top:1272.00px;width:16.00px;height:20.00px;background:#e2e4e3;"></div>
<div class="r" style="left:2245.00px;top:1372.00px;width:20.00px;height:20.00px;background:#d5d6d8;"></div>
<div class="r" style="left:2265.00px;top:1372.00px;width:20.00px;height:20.00px;background:#f1f2f2;"></div>
<div class="r" style="left:2345.00px;top:1372.00px;width:20.00px;height:20.00px;background:#7f8285;"></div>
<div class="r" style="left:2208.00px;top:1392.00px;width:17.00px;height:20.00px;background:#f8f8f8;"></div>
<div class="r" style="left:2325.00px;top:1392.00px;width:20.00px;height:20.00px;background:#ececec;"></div>
<div class="r" style="left:2385.00px;top:1392.00px;width:20.00px;height:20.00px;background:#fcfcfc;"></div>
<div class="r" style="left:2405.00px;top:1392.00px;width:16.00px;height:20.00px;background:#fcfcfc;"></div>
<div class="r" style="left:2208.00px;top:1512.00px;width:17.00px;height:20.00px;background:#55595c;"></div>
<div class="r" style="left:2225.00px;top:1512.00px;width:20.00px;height:20.00px;background:#dcdcdc;"></div>
<div class="r" style="left:2245.00px;top:1512.00px;width:20.00px;height:20.00px;background:#e8e8e8;"></div>
<div class="r" style="left:2285.00px;top:1512.00px;width:20.00px;height:20.00px;background:#e9eae9;"></div>
<div class="r" style="left:2325.00px;top:1512.00px;width:20.00px;height:20.00px;background:#76797c;"></div>
<div class="r" style="left:2345.00px;top:1512.00px;width:20.00px;height:20.00px;background:#fbfcfb;"></div>
<div class="r" style="left:2385.00px;top:1512.00px;width:20.00px;height:20.00px;background:#eeeeee;"></div>
<div class="r" style="left:2405.00px;top:1512.00px;width:16.00px;height:20.00px;background:#6e7174;"></div>
<div class="r" style="left:2208.00px;top:1632.00px;width:17.00px;height:20.00px;background:#eeeeee;"></div>
<div class="r" style="left:2245.00px;top:1632.00px;width:20.00px;height:20.00px;background:#c3c4c6;"></div>
<div class="r" style="left:2265.00px;top:1632.00px;width:20.00px;height:20.00px;background:#545759;"></div>
<div class="r" style="left:2285.00px;top:1632.00px;width:20.00px;height:20.00px;background:#ececec;"></div>
<div class="r" style="left:2305.00px;top:1632.00px;width:20.00px;height:20.00px;background:#414549;"></div>
<div class="r" style="left:2325.00px;top:1632.00px;width:20.00px;height:20.00px;background:#fcfcfc;"></div>
<div class="r" style="left:2345.00px;top:1632.00px;width:20.00px;height:20.00px;background:#808385;"></div>
<div class="r" style="left:2365.00px;top:1632.00px;width:20.00px;height:20.00px;background:#51555c;"></div>
<div class="r" style="left:2385.00px;top:1632.00px;width:20.00px;height:20.00px;background:#f1f2f1;"></div>
<div class="r" style="left:2225.00px;top:1752.00px;width:20.00px;height:20.00px;background:#dcdcdc;"></div>
<div class="r" style="left:2245.00px;top:1752.00px;width:20.00px;height:20.00px;background:#474b4f;"></div>
<div class="r" style="left:2285.00px;top:1752.00px;width:20.00px;height:20.00px;background:#e8e8e8;"></div>
<div class="r" style="left:2305.00px;top:1752.00px;width:20.00px;height:20.00px;background:#eff0ef;"></div>
<div class="r" style="left:2345.00px;top:1752.00px;width:20.00px;height:20.00px;background:#f9f9f9;"></div>
<div class="r" style="left:2385.00px;top:1752.00px;width:20.00px;height:20.00px;background:#282d34;"></div>
<div class="r" style="left:2405.00px;top:1752.00px;width:16.00px;height:20.00px;background:#7a7b7e;"></div>
<div class="r" style="left:31.00px;top:31.00px;width:2878.00px;height:1749.00px;border:1.6px solid rgba(125,125,125,0.55);border-radius:16px;"></div>
</div>
</body></html>
